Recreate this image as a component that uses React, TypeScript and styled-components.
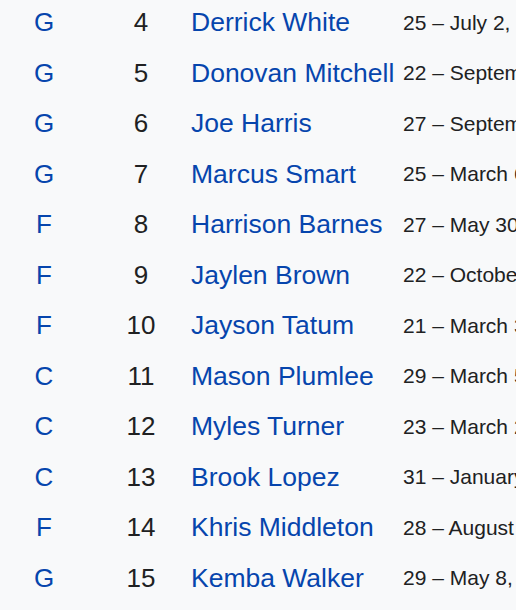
import React from 'react'
import styled, { createGlobalStyle } from 'styled-components'

const GlobalStyle = createGlobalStyle`
    html, body {
        margin: 0;
        padding: 0;
        background: #f8f9fa;
        overflow: hidden;
    }
`

const Table = styled.div`
    display: flex;
    flex-direction: column;
    width: 516px;
    background: #f8f9fa;
    font-family: 'Liberation Sans', Arial, sans-serif;
    color: #202122;
    white-space: nowrap;
    overflow: hidden;
`

const Row = styled.div`
    display: grid;
    grid-template-columns: 88px 100px 212px 1fr;
    align-items: center;
    height: 50.5px;
    box-sizing: border-box;
    padding-bottom: 5px;
`

const Pos = styled.a`
    font-size: 26px;
    color: #0645ad;
    text-align: center;
    text-decoration: none;
`

const Num = styled.span`
    font-size: 26px;
    text-align: center;
    padding-left: 6px;
`

const Name = styled.a`
    font-size: 26.5px;
    color: #0645ad;
    padding-left: 3px;
    text-decoration: none;
`

const Age = styled.span`
    font-size: 21px;
    padding-left: 3px;
    overflow: hidden;
`

const players = [
    { pos: 'G', num: 4, name: 'Derrick White', age: '25 – July 2, 1994' },
    { pos: 'G', num: 5, name: 'Donovan Mitchell', age: '22 – September 7, 1996' },
    { pos: 'G', num: 6, name: 'Joe Harris', age: '27 – September 6, 1991' },
    { pos: 'G', num: 7, name: 'Marcus Smart', age: '25 – March 6, 1994' },
    { pos: 'F', num: 8, name: 'Harrison Barnes', age: '27 – May 30, 1992' },
    { pos: 'F', num: 9, name: 'Jaylen Brown', age: '22 – October 24, 1996' },
    { pos: 'F', num: 10, name: 'Jayson Tatum', age: '21 – March 3, 1998' },
    { pos: 'C', num: 11, name: 'Mason Plumlee', age: '29 – March 5, 1990' },
    { pos: 'C', num: 12, name: 'Myles Turner', age: '23 – March 24, 1996' },
    { pos: 'C', num: 13, name: 'Brook Lopez', age: '31 – January 1, 1988' },
    { pos: 'F', num: 14, name: 'Khris Middleton', age: '28 – August 12, 1991' },
    { pos: 'G', num: 15, name: 'Kemba Walker', age: '29 – May 8, 1990' },
]

const App: React.FC = () => {
    return (
        <>
            <GlobalStyle />
            <Table>
                {players.map(p => (
                    <Row key={p.num}>
                        <Pos href="#">{p.pos}</Pos>
                        <Num>{p.num}</Num>
                        <Name href="#">{p.name}</Name>
                        <Age>{p.age}</Age>
                    </Row>
                ))}
            </Table>
        </>
    )
}

export default App
